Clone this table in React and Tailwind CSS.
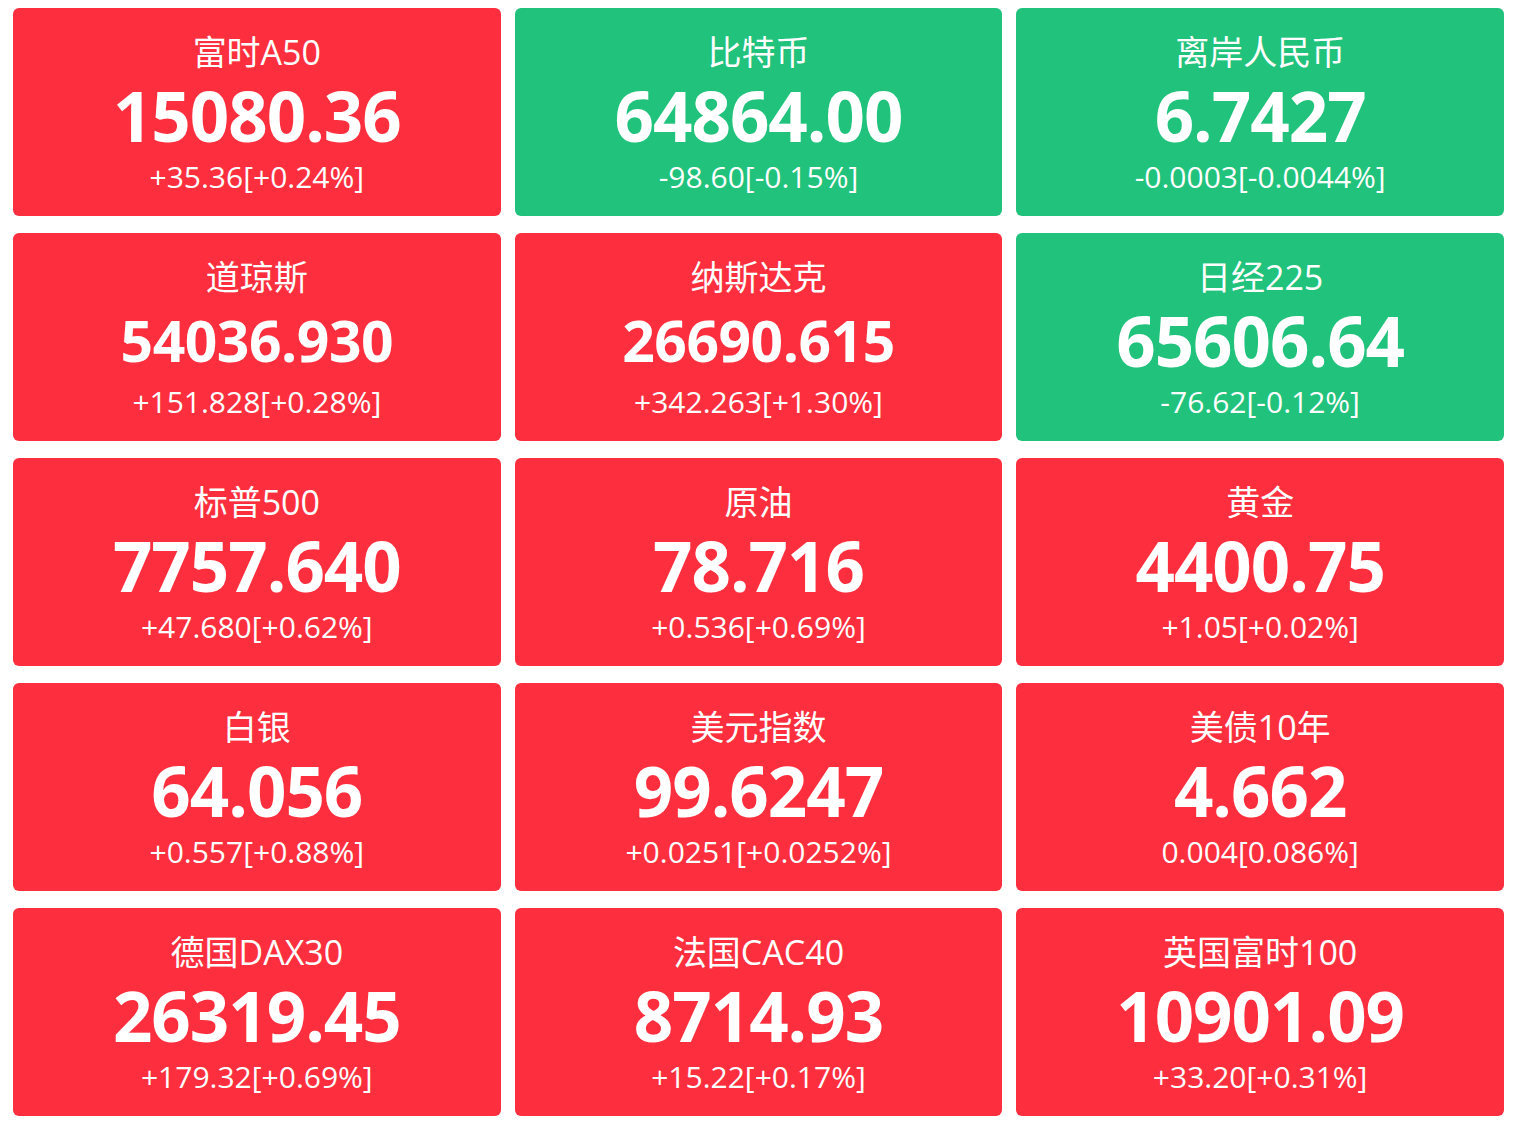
const quotes = [
  { name: "富时A50", price: "15080.36", change: "+35.36[+0.24%]", up: true },
  { name: "比特币", price: "64864.00", change: "-98.60[-0.15%]", up: false },
  { name: "离岸人民币", price: "6.7427", change: "-0.0003[-0.0044%]", up: false },
  { name: "道琼斯", price: "54036.930", change: "+151.828[+0.28%]", up: true },
  { name: "纳斯达克", price: "26690.615", change: "+342.263[+1.30%]", up: true },
  { name: "日经225", price: "65606.64", change: "-76.62[-0.12%]", up: false },
  { name: "标普500", price: "7757.640", change: "+47.680[+0.62%]", up: true },
  { name: "原油", price: "78.716", change: "+0.536[+0.69%]", up: true },
  { name: "黄金", price: "4400.75", change: "+1.05[+0.02%]", up: true },
  { name: "白银", price: "64.056", change: "+0.557[+0.88%]", up: true },
  { name: "美元指数", price: "99.6247", change: "+0.0251[+0.0252%]", up: true },
  { name: "美债10年", price: "4.662", change: "0.004[0.086%]", up: true },
  { name: "德国DAX30", price: "26319.45", change: "+179.32[+0.69%]", up: true },
  { name: "法国CAC40", price: "8714.93", change: "+15.22[+0.17%]", up: true },
  { name: "英国富时100", price: "10901.09", change: "+33.20[+0.31%]", up: true },
];

const QuoteCard = ({ name, price, change, up }) => {
  // long prices get a smaller size so they fit like the others
  const long = price.length > 8
  return (
    <div
      className={`flex flex-col items-center h-[208px] rounded-md text-white pt-[24px] ${
        up ? "bg-[#fd2f3e]" : "bg-[#20c27c]"
      }`}
    >
      <div className="text-[34px] leading-[40px]">{name}</div>
      <div
        className={`leading-[74px] font-bold mt-[6px] ${
          long ? "text-[57px] tracking-[-0.5px]" : "text-[69px] tracking-[-1px]"
        }`}
      >
        {price}
      </div>
      <div className="text-[30px] leading-[34px] mt-[8px]">{change}</div>
    </div>
  )
}

export default function App() {
  return (
    <section className="w-[1516px] h-[1124px] bg-white font-['Open_Sans','Noto_Sans_CJK_SC',sans-serif]">
      <div className="grid grid-cols-3 gap-x-[14px] gap-y-[17px] pl-[13px] pr-[12px] pt-[8px]">
        {quotes.map((q) => (
          <QuoteCard key={q.name} {...q}/>
        ))}
      </div>
    </section>
  )
}
